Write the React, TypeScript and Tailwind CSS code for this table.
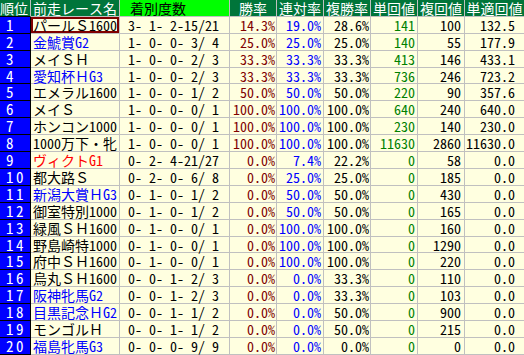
import React from "react";

type Row = {
  name: string;
  nameColor: string;
  count: string;
  win: string;
  ren: string;
  fuku: string;
  tan: string;
  fukuKai: string;
  teki: string;
};

const BLACK = "text-black";
const BLUE = "text-[#0000ff]";
const RED = "text-[#ff0000]";

const rows: Row[] = [
  { name: "パールＳ1600", nameColor: BLACK, count: "3- 1- 2-15/21", win: "14.3%", ren: "19.0%", fuku: "28.6%", tan: "141", fukuKai: "100", teki: "132.5" },
  { name: "金鯱賞G2", nameColor: BLUE, count: "1- 0- 0- 3/ 4", win: "25.0%", ren: "25.0%", fuku: "25.0%", tan: "140", fukuKai: "55", teki: "177.9" },
  { name: "メイＳＨ", nameColor: BLACK, count: "1- 0- 0- 2/ 3", win: "33.3%", ren: "33.3%", fuku: "33.3%", tan: "413", fukuKai: "146", teki: "433.1" },
  { name: "愛知杯ＨG3", nameColor: BLUE, count: "1- 0- 0- 2/ 3", win: "33.3%", ren: "33.3%", fuku: "33.3%", tan: "736", fukuKai: "246", teki: "723.2" },
  { name: "エメラル1600", nameColor: BLACK, count: "1- 0- 0- 1/ 2", win: "50.0%", ren: "50.0%", fuku: "50.0%", tan: "220", fukuKai: "90", teki: "357.6" },
  { name: "メイＳ", nameColor: BLACK, count: "1- 0- 0- 0/ 1", win: "100.0%", ren: "100.0%", fuku: "100.0%", tan: "640", fukuKai: "240", teki: "640.0" },
  { name: "ホンコン1000", nameColor: BLACK, count: "1- 0- 0- 0/ 1", win: "100.0%", ren: "100.0%", fuku: "100.0%", tan: "230", fukuKai: "140", teki: "230.0" },
  { name: "1000万下・牝", nameColor: BLACK, count: "1- 0- 0- 0/ 1", win: "100.0%", ren: "100.0%", fuku: "100.0%", tan: "11630", fukuKai: "2860", teki: "11630.0" },
  { name: "ヴィクトG1", nameColor: RED, count: "0- 2- 4-21/27", win: "0.0%", ren: "7.4%", fuku: "22.2%", tan: "0", fukuKai: "58", teki: "0.0" },
  { name: "都大路Ｓ", nameColor: BLACK, count: "0- 2- 0- 6/ 8", win: "0.0%", ren: "25.0%", fuku: "25.0%", tan: "0", fukuKai: "185", teki: "0.0" },
  { name: "新潟大賞ＨG3", nameColor: BLUE, count: "0- 1- 0- 1/ 2", win: "0.0%", ren: "50.0%", fuku: "50.0%", tan: "0", fukuKai: "430", teki: "0.0" },
  { name: "御室特別1000", nameColor: BLACK, count: "0- 1- 0- 1/ 2", win: "0.0%", ren: "50.0%", fuku: "50.0%", tan: "0", fukuKai: "165", teki: "0.0" },
  { name: "緑風ＳＨ1600", nameColor: BLACK, count: "0- 1- 0- 0/ 1", win: "0.0%", ren: "100.0%", fuku: "100.0%", tan: "0", fukuKai: "160", teki: "0.0" },
  { name: "野島崎特1000", nameColor: BLACK, count: "0- 1- 0- 0/ 1", win: "0.0%", ren: "100.0%", fuku: "100.0%", tan: "0", fukuKai: "1290", teki: "0.0" },
  { name: "府中ＳＨ1600", nameColor: BLACK, count: "0- 1- 0- 0/ 1", win: "0.0%", ren: "100.0%", fuku: "100.0%", tan: "0", fukuKai: "220", teki: "0.0" },
  { name: "烏丸ＳＨ1600", nameColor: BLACK, count: "0- 0- 1- 2/ 3", win: "0.0%", ren: "0.0%", fuku: "33.3%", tan: "0", fukuKai: "110", teki: "0.0" },
  { name: "阪神牝馬G2", nameColor: BLUE, count: "0- 0- 1- 2/ 3", win: "0.0%", ren: "0.0%", fuku: "33.3%", tan: "0", fukuKai: "103", teki: "0.0" },
  { name: "目黒記念ＨG2", nameColor: BLUE, count: "0- 0- 1- 1/ 2", win: "0.0%", ren: "0.0%", fuku: "50.0%", tan: "0", fukuKai: "900", teki: "0.0" },
  { name: "モンゴルＨ", nameColor: BLACK, count: "0- 0- 1- 1/ 2", win: "0.0%", ren: "0.0%", fuku: "50.0%", tan: "0", fukuKai: "215", teki: "0.0" },
  { name: "福島牝馬G3", nameColor: BLUE, count: "0- 0- 0- 9/ 9", win: "0.0%", ren: "0.0%", fuku: "0.0%", tan: "0", fukuKai: "0", teki: "0.0" },
];

// two rows are a pixel shorter so row 20 ends at the bottom edge
const rowH = (i: number) => (i === 3 || i === 13 ? "h-[16px]" : "h-[17px]");

const cell = "h-full shrink-0 border-r border-b border-[#c0c0c0] whitespace-pre";

const NumCell = ({
  w,
  text,
  color,
  pr,
}: {
  w: string;
  text: string;
  color: string;
  pr: string;
}) => <div className={`${w} ${cell} text-right ${pr} ${color}`}>{text}</div>;

export default function App() {
  return (
    <div className="w-[524px] h-[355px] overflow-hidden bg-[#ffffe0] font-['Noto_Sans_Mono_CJK_JP','Noto_Sans_CJK_JP',monospace] text-[14px] leading-[16px]">
      {/* header */}
      <div className="flex h-[17px] text-white bg-[#00753a]">
        <div className={`w-[31px] ${cell} border-b-black`}>順位</div>
        <div className={`w-[89px] ${cell} pl-[2px]`}>前走レース名</div>
        <div className={`w-[110px] ${cell} pl-[10px] bg-[#00ff00] text-black`}>着別度数</div>
        <div className={`w-[47px] ${cell} text-center`}>勝率</div>
        <div className={`w-[47px] ${cell} text-center`}>連対率</div>
        <div className={`w-[47px] ${cell} text-center`}>複勝率</div>
        <div className={`w-[47px] ${cell} text-center`}>単回値</div>
        <div className={`w-[47px] ${cell} text-center`}>複回値</div>
        <div className={`w-[59px] ${cell} text-center border-r-0`}>単適回値</div>
      </div>

      {rows.map((r, i) => (
        <div key={i} className={`flex ${rowH(i)}`}>
          <div className="w-[31px] h-full shrink-0 bg-[#0000ff] text-white border-r border-b border-black pl-[6px] text-[15px] leading-[16px] tracking-[2.5px] whitespace-pre">
            {i + 1}
          </div>
          <div
            className={`w-[89px] ${cell} pl-[2px] ${r.nameColor} ${
              i === 0 ? "ring-2 ring-inset ring-[#800000]" : ""
            }`}
          >
            {r.name}
          </div>
          <div className={`w-[110px] ${cell} pl-[8px] text-black`}>{r.count}</div>
          <NumCell w="w-[47px]" text={r.win} color="text-[#800000]" pr="pr-[1px]" />
          <NumCell w="w-[47px]" text={r.ren} color="text-[#0000ff]" pr="pr-[2px]" />
          <NumCell w="w-[47px]" text={r.fuku} color="text-black" pr="pr-[1px]" />
          <NumCell w="w-[47px]" text={r.tan} color="text-[#008000]" pr="pr-[2px]" />
          <NumCell w="w-[47px]" text={r.fukuKai} color="text-black" pr="pr-[3px]" />
          <div className={`w-[59px] ${cell} border-r-0 text-right pr-[9px] text-black`}>{r.teki}</div>
        </div>
      ))}
    </div>
  );
}
